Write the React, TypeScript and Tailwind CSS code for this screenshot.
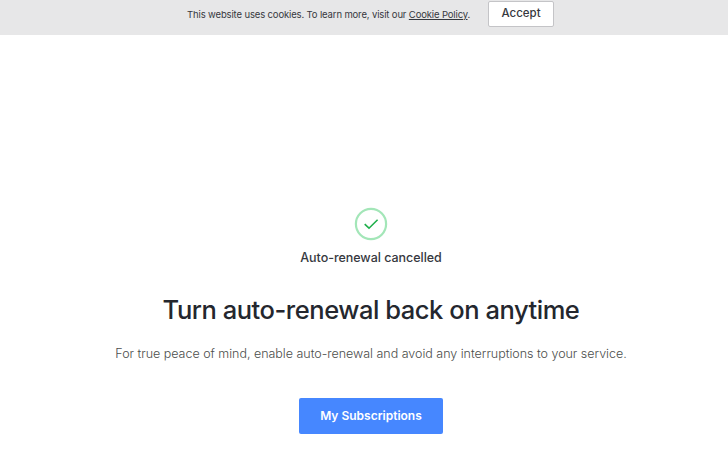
function CookieBar() {
  return (
    <div className="flex h-[35px] items-start bg-[#e7e7e8] pl-[187px] text-[#36383e]">
      <p className="mt-[6px] w-[284px] shrink-0 whitespace-nowrap text-[9.5px] leading-[17px] tracking-[-0.14px]">
        This website uses cookies. To learn more, visit our{" "}
        <a href="#" className="underline underline-offset-1">
          Cookie Policy
        </a>
        .
      </p>
      <button className="mt-px ml-[17px] flex h-[26px] w-[66px] shrink-0 items-center justify-center rounded-[2px] border border-[#c4c4c7] bg-white text-[11.5px] font-medium">
        Accept
      </button>
    </div>
  );
}

function CheckBadge() {
  return (
    <svg width="34" height="34" viewBox="0 0 34 34" fill="none" aria-hidden="true">
      <circle cx="17" cy="17" r="15.1" stroke="#a3e6b8" strokeWidth="2.2" />
      <path d="M10.7 17.2L15 21.2L23.6 12.7" stroke="#1faf4b" strokeWidth="1.6" />
    </svg>
  );
}

export default function App() {
  return (
    <div className="h-[450px] overflow-hidden bg-white font-['Inter','Liberation_Sans',sans-serif]">
      <CookieBar />
      <main className="flex flex-col items-center whitespace-nowrap pl-[14px] pt-[172px]">
        <CheckBadge />
        <p className="mt-[7px] text-[12.5px] font-medium leading-5 tracking-[-0.03px] text-[#36383e]">
          Auto-renewal cancelled
        </p>
        <h1 className="mt-[25px] text-[25.5px] font-medium leading-[34px] tracking-[-0.46px] text-[#24272e]">
          Turn auto-renewal back on anytime
        </h1>
        <p className="mt-[17px] text-[12.5px] font-light leading-5 tracking-[-0.02px] text-[#4b4d4b]">
          For true peace of mind, enable auto-renewal and avoid any interruptions to your service.
        </p>
        <button className="mt-[34px] flex h-[36px] w-[144px] items-center justify-center rounded-[2px] bg-[#4687ff] text-[12px] font-semibold text-white">
          My Subscriptions
        </button>
      </main>
    </div>
  );
}
